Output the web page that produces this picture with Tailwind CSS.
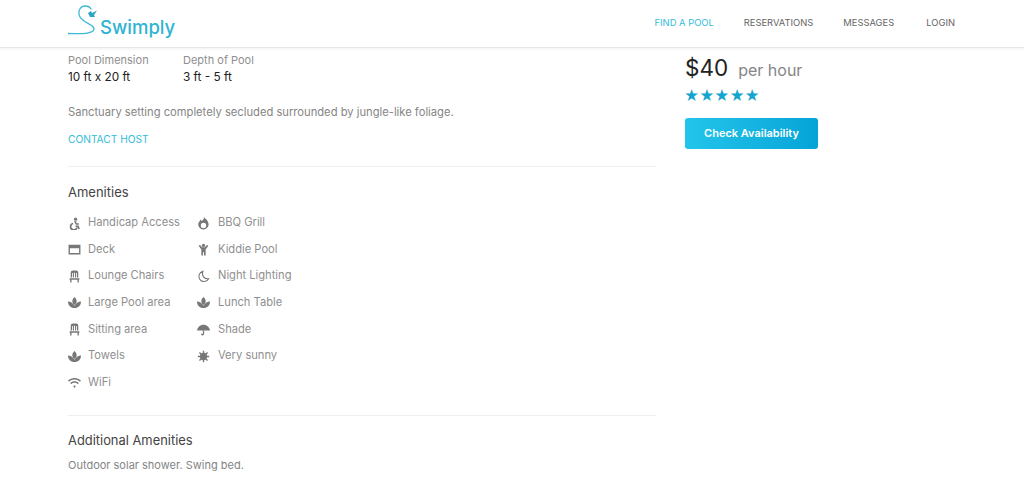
<!DOCTYPE html>
<html lang="en">
<head>
  <meta charset="UTF-8" />
  <title>Swimply</title>
  <script src="https://cdn.jsdelivr.net/npm/@tailwindcss/browser@4"></script>
</head>
<body class="bg-white h-[490px] overflow-hidden font-['Inter',sans-serif] text-[#8f8f8f]">

  <!-- Header -->
  <header class="h-[48px] border-b border-[#e6e6e6] shadow-[0_1px_3px_rgba(0,0,0,0.06)] flex items-center justify-between pl-[68px] pr-[69px]">
    <div class="flex items-end h-[32px] -mt-[8px]">
      <svg width="32" height="32" viewBox="0 0 32 32" fill="none">
        <path d="M0 29.500 C8 29.500 20 31 25 27 C30 21 15 20 11.500 12 C9.500 6 13 2 17 2 C20 2 22 3 23 5" stroke="#3cb9d6" stroke-width="1.300" stroke-linecap="round"/>
        <path d="M20 9 L23 7 L24 9 L29 6.500 L26 11 L27 13 L22 13 Z" fill="#2ba6c6"/>
      </svg>
      <span class="text-[18.5px] leading-[24px] font-medium text-[#2fb3d2] -mb-[3px]">Swimply</span>
    </div>
    <nav class="flex items-center gap-[30px] text-[9.4px] text-[#666666]">
      <a class="text-[#35bcd8]">FIND A POOL</a>
      <a>RESERVATIONS</a>
      <a>MESSAGES</a>
      <a class="ml-[2px]">LOGIN</a>
    </nav>
  </header>

  <main class="flex pl-[68px]">
    <!-- Left column -->
    <div class="w-[588px] shrink-0">
      <div class="flex gap-[34px] pt-[5px]">
        <div class="w-[81px]">
          <p class="text-[11px] leading-[14px] text-[#8f8f8f] whitespace-nowrap">Pool Dimension</p>
          <p class="text-[11.8px] leading-[16px] mt-[2px] text-[#222222] whitespace-nowrap">10 ft x 20 ft</p>
        </div>
        <div>
          <p class="text-[11px] leading-[14px] text-[#8f8f8f] whitespace-nowrap">Depth of Pool</p>
          <p class="text-[11.8px] leading-[16px] mt-[2px] text-[#222222] whitespace-nowrap">3 ft - 5 ft</p>
        </div>
      </div>
      <p class="text-[11.2px] leading-[16px] mt-[19px] text-[#858585]">Sanctuary setting completely secluded surrounded by jungle-like foliage.</p>
      <p class="text-[10.2px] leading-[14px] mt-[12px] text-[#35bcd8]">CONTACT HOST</p>
      <div class="border-t border-[#efefef] mt-[20px]"></div>

      <h3 class="text-[13px] leading-[18px] mt-[16px] text-[#444444]">Amenities</h3>

      <div class="flex mt-[13px] text-[11.15px] leading-[16px]">
        <ul class="w-[129px] flex flex-col gap-[10.67px]">
          <li class="flex items-center gap-[7px] h-[16px]">
            <svg class="w-[13px] h-[13px] shrink-0 mt-[2px]" viewBox="0 0 24 24" fill="#777"><circle cx="14" cy="4" r="3"/><path d="M11 8h4.500v3.500H20v3h-5.500zM9.500 10.500v3a4.500 4.500 0 1 0 5.500 6h3A7.500 7.500 0 1 1 9.500 10.500zM14 15.500h5.500l2.500 6-3 1-1.500-4H14z"/></svg>
            <span class="whitespace-nowrap">Handicap Access</span>
          </li>
          <li class="flex items-center gap-[7px] h-[16px]">
            <svg class="w-[13px] h-[13px] shrink-0 mt-[1px]" viewBox="0 0 24 24" fill="#777"><path d="M1 3h22v18H1zm2.500 6.500V18.500h17V9.500z"/></svg>
            <span>Deck</span>
          </li>
          <li class="flex items-center gap-[7px] h-[16px]">
            <svg class="w-[13px] h-[13px] shrink-0 mt-[2px]" viewBox="0 0 24 24" fill="#777"><path d="M9 1h6a4 4 0 0 1 4 4v9h-2.500V5.500H15V14h-2V5h-2v9H9V5.500H7.500V14H5V5a4 4 0 0 1 4-4zM3 15h18v3h-1v5h-2.500v-5h-11v5H4v-5H3z"/></svg>
            <span class="whitespace-nowrap">Lounge Chairs</span>
          </li>
          <li class="flex items-center gap-[7px] h-[16px]">
            <svg class="w-[13px] h-[13px] shrink-0 mt-[2px]" viewBox="0 0 24 24" fill="#777"><path d="M12 2c2.500 2 4 5 4 8 0 2.500-1.500 4.500-4 6.500-2.500-2-4-4-4-6.500 0-3 1.500-6 4-8zM0 10c4.500.2 9 2.500 12 8 3-5.500 7.500-7.800 12-8 0 7.500-5 12-12 12S0 17.500 0 10z"/></svg>
            <span class="whitespace-nowrap">Large Pool area</span>
          </li>
          <li class="flex items-center gap-[7px] h-[16px]">
            <svg class="w-[13px] h-[13px] shrink-0 mt-[2px]" viewBox="0 0 24 24" fill="#777"><path d="M9 1h6a4 4 0 0 1 4 4v9h-2.500V5.500H15V14h-2V5h-2v9H9V5.500H7.500V14H5V5a4 4 0 0 1 4-4zM3 15h18v3h-1v5h-2.500v-5h-11v5H4v-5H3z"/></svg>
            <span class="whitespace-nowrap">Sitting area</span>
          </li>
          <li class="flex items-center gap-[7px] h-[16px]">
            <svg class="w-[13px] h-[13px] shrink-0 mt-[2px]" viewBox="0 0 24 24" fill="#777"><path d="M12 2c2.500 2 4 5 4 8 0 2.500-1.500 4.500-4 6.500-2.500-2-4-4-4-6.500 0-3 1.500-6 4-8zM0 10c4.500.2 9 2.500 12 8 3-5.500 7.500-7.800 12-8 0 7.500-5 12-12 12S0 17.500 0 10z"/></svg>
            <span>Towels</span>
          </li>
          <li class="flex items-center gap-[7px] h-[16px]">
            <svg class="w-[13px] h-[13px] shrink-0 mt-[2px]" viewBox="0 0 24 24" fill="#777"><path d="M0 8.500l2 2c5.500-5.500 14.500-5.500 20 0l2-2C17.500 2 6.500 2 0 8.500zm4 4.500l2 2c3.300-3.300 8.700-3.300 12 0l2-2c-4.400-4.400-11.600-4.400-16 0zm5.500 5.500L12 22l2.500-3.500c-1.400-1.400-3.600-1.400-5 0z"/></svg>
            <span>WiFi</span>
          </li>
        </ul>
        <ul class="flex flex-col gap-[10.67px]">
          <li class="flex items-center gap-[8px] h-[16px]">
            <svg class="w-[13px] h-[13px] shrink-0 mt-[2px]" viewBox="0 0 24 24" fill="#777"><path fill-rule="evenodd" d="M13 0c1 3 7 5 8 11a9.500 9.500 0 1 1-18.500 1C3 9 5 8 6.500 4.500c1 1 1.500 2 1.500 3C11 6.500 13 3.500 13 0zM12 10.500a5 5 0 1 0 0 10 5 5 0 0 0 0-10z"/></svg>
            <span class="whitespace-nowrap">BBQ Grill</span>
          </li>
          <li class="flex items-center gap-[8px] h-[16px]">
            <svg class="w-[13px] h-[13px] shrink-0 mt-[2px]" viewBox="0 0 24 24" fill="#777"><circle cx="12" cy="4.500" r="3"/><path d="M3 5l2.500-1.500L9.500 8h5l4-4.500L21 5l-5 7v11h-3v-6h-2v6H8V12z"/></svg>
            <span class="whitespace-nowrap">Kiddie Pool</span>
          </li>
          <li class="flex items-center gap-[8px] h-[16px]">
            <svg class="w-[13px] h-[13px] shrink-0 mt-[2px]" viewBox="0 0 24 24" fill="none" stroke="#777" stroke-width="2"><path d="M11 2.500a9.500 9.500 0 1 0 10.500 13.500 9.500 9.500 0 0 1-10.500-13.500z"/></svg>
            <span class="whitespace-nowrap">Night Lighting</span>
          </li>
          <li class="flex items-center gap-[8px] h-[16px]">
            <svg class="w-[13px] h-[13px] shrink-0 mt-[2px]" viewBox="0 0 24 24" fill="#777"><path d="M12 2c2.500 2 4 5 4 8 0 2.500-1.500 4.500-4 6.500-2.500-2-4-4-4-6.500 0-3 1.500-6 4-8zM0 10c4.500.2 9 2.500 12 8 3-5.500 7.500-7.800 12-8 0 7.500-5 12-12 12S0 17.500 0 10z"/></svg>
            <span class="whitespace-nowrap">Lunch Table</span>
          </li>
          <li class="flex items-center gap-[8px] h-[16px]">
            <svg class="w-[13px] h-[13px] shrink-0 mt-[2px]" viewBox="0 0 24 24" fill="#777"><path d="M12 3C5.500 3 .5 8 0 14h24C23.500 8 18.500 3 12 3z"/><path d="M10.800 14h2.400v6a3 3 0 0 1-6 0h2a1 1 0 0 0 1.600 0z"/></svg>
            <span>Shade</span>
          </li>
          <li class="flex items-center gap-[8px] h-[16px]">
            <svg class="w-[13px] h-[13px] shrink-0 mt-[2px]" viewBox="0 0 24 24" fill="#777" stroke="#777" stroke-width="2.500"><circle cx="12" cy="12" r="5.500"/><path d="M12 1.500v4M12 18.500v4M1.500 12h4M18.500 12h4M4.500 4.500l3 3M16.500 16.500l3 3M19.500 4.500l-3 3M7.500 16.500l-3 3"/></svg>
            <span class="whitespace-nowrap">Very sunny</span>
          </li>
        </ul>
      </div>

      <div class="border-t border-[#efefef] mt-[25px]"></div>
      <h3 class="text-[12.9px] leading-[18px] mt-[16px] text-[#444444]">Additional Amenities</h3>
      <p class="text-[11px] leading-[16px] mt-[7px] text-[#858585]">Outdoor solar shower. Swing bed.</p>
    </div>

    <!-- Right column -->
    <aside class="ml-[29px] pt-[5px]">
      <div class="flex items-baseline gap-[10px]">
        <span class="text-[22.5px] leading-[30px] text-[#222222]">$40</span>
        <span class="text-[16px] text-[#858585]">per hour</span>
      </div>
      <div class="text-[#12a5cf] text-[14.5px] leading-[18px] mt-[4px] -ml-[1px]">★★★★★</div>
      <button class="mt-[13px] w-[133px] h-[31px] rounded-[3px] bg-gradient-to-r from-[#22c5ea] to-[#04a4d8] text-white text-[11px] font-semibold">Check Availability</button>
    </aside>
  </main>
</body>
</html>
